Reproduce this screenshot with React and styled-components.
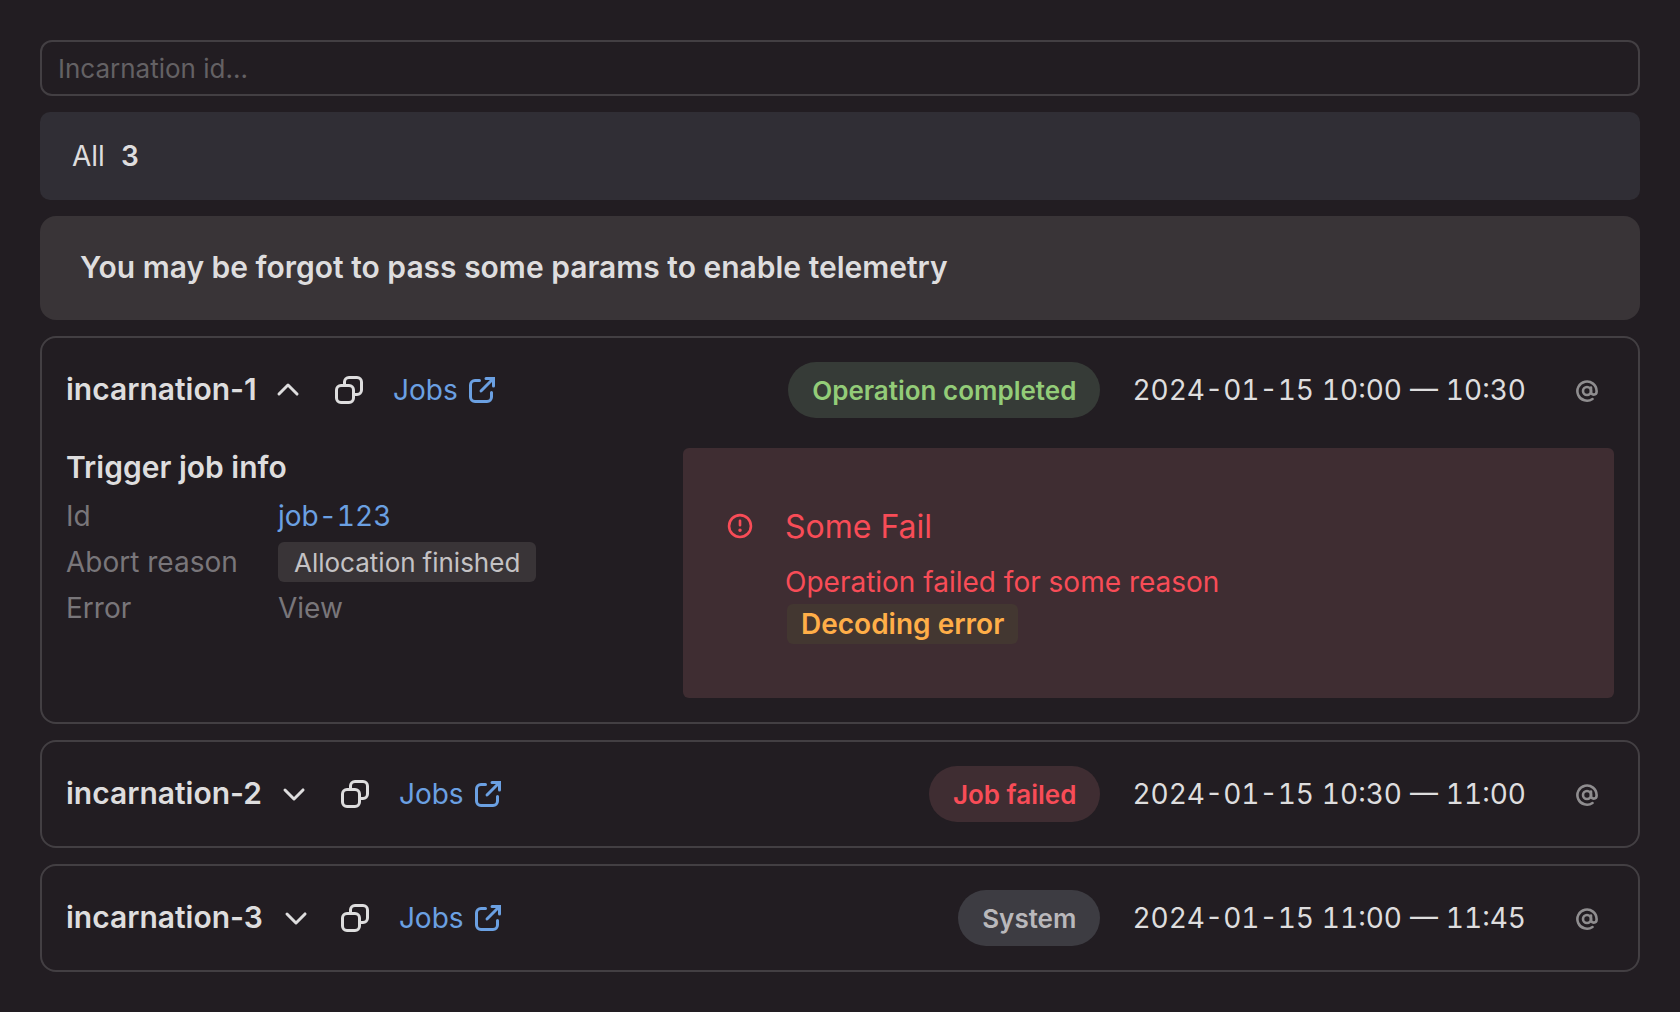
import React from "react";
import styled, { createGlobalStyle } from "styled-components";

const GlobalStyle = createGlobalStyle`
  *, *::before, *::after { box-sizing: border-box; }
  body {
    margin: 0;
    background: #221d22;
    color: #dedddE;
    font-family: Inter, "Liberation Sans", sans-serif;
    font-size: 28px;
    line-height: 40px;
  }
`;

const Page = styled.main`
  display: flex;
  flex-direction: column;
  gap: 16px;
  min-height: 1012px;
  padding: 40px;
`;

const SearchInput = styled.input`
  width: 100%;
  height: 56px;
  padding: 0 16px;
  border: 2px solid #433f43;
  border-radius: 12px;
  outline: none;
  background: transparent;
  color: inherit;
  font: inherit;
  font-size: 26px;
  &::placeholder { color: #646164; opacity: 1; }
`;

const Summary = styled.section`
  display: flex;
  align-items: center;
  gap: 16px;
  height: 88px;
  padding: 0 32px;
  border-radius: 10px;
  background: #302e35;
`;

const Count = styled.span`
  font-weight: 600;
`;

const Notice = styled.section`
  display: flex;
  align-items: center;
  height: 104px;
  padding: 0 40px 2px;
  border-radius: 16px;
  background: #393437;
  font-size: 30px;
  font-weight: 600;
`;

const Card = styled.article`
  display: flex;
  flex-direction: column;
  gap: 30px;
  padding: 24px;
  border: 2px solid #433f43;
  border-radius: 16px;
`;

const CardHeader = styled.header`
  display: flex;
  align-items: center;
  height: 56px;
`;

const Name = styled.h2`
  margin: 0;
  padding-bottom: 2px;
  font-size: 30px;
  font-weight: 600;
`;

const IconButton = styled.button`
  display: flex;
  margin: 0 0 0 ${(p) => p.$before}px;
  padding: 0;
  border: 0;
  background: none;
  color: inherit;
`;

const Link = styled.a`
  display: flex;
  align-items: center;
  gap: 8px;
  margin-left: ${(p) => p.$before || 0}px;
  color: #6ba0e2;
  text-decoration: none;
`;

const badgeTones = {
  success: ["#363b37", "#93cc78"],
  danger: ["#3f2d32", "#f84c57"],
  neutral: ["#3d3c42", "#b9b8bb"],
};

const StatusBadge = styled.span`
  height: 56px;
  margin-left: auto;
  padding: 1px 24px 0;
  border-radius: 28px;
  background: ${(p) => badgeTones[p.$tone][0]};
  color: ${(p) => badgeTones[p.$tone][1]};
  font-size: 26px;
  font-weight: 600;
  line-height: 56px;
`;

const Period = styled.time`
  margin-left: 32px;
  font-variant-numeric: tabular-nums;
  word-spacing: 0.4px;
`;

const Mention = styled.span`
  display: flex;
  justify-content: center;
  width: 56px;
  margin-left: 32px;
  padding: 2px 0 0 2px;
  color: #8f8d8f;
`;

const Details = styled.div`
  display: flex;
  justify-content: space-between;
`;

const JobInfo = styled.section`
  display: flex;
  flex-direction: column;
`;

const JobTitle = styled.h3`
  margin: 0 0 10px;
  font-size: 30px;
  font-weight: 600;
  line-height: 38px;
`;

const JobGrid = styled.dl`
  display: grid;
  grid-template-columns: 170px auto;
  column-gap: 42px;
  row-gap: 6px;
  margin: 0;
  white-space: nowrap;
  color: #79767a;
`;

const Term = styled.dt``;

const Value = styled.dd`
  display: flex;
  align-items: center;
  height: 40px;
  margin: 0;
  font-variant-numeric: tabular-nums;
`;

const Tag = styled.span`
  height: 40px;
  padding: 1px 16px 0;
  border-radius: 6px;
  background: #393437;
  color: #c4c2c4;
  font-size: 26px;
`;

const Alert = styled.section`
  display: flex;
  gap: 31px;
  width: 931px;
  height: 250px;
  padding: 59px 43px;
  border-radius: 6px;
  background: #3f2d32;
  color: #f84c57;
`;

const AlertIcon = styled.span`
  display: flex;
  align-items: center;
  height: 38px;
`;

const AlertBody = styled.div`
  display: flex;
  flex-direction: column;
  align-items: flex-start;
`;

const AlertTitle = styled.h3`
  margin: 0 0 17px;
  font-size: 32px;
  font-weight: 400;
  line-height: 40px;
`;

const AlertText = styled.p`
  margin: 0;
  line-height: 36px;
`;

const WarningTag = styled.span`
  margin: 4px 0 0 2px;
  padding: 0 14px;
  border-radius: 6px;
  background: #433731;
  color: #ffae48;
  font-weight: 600;
`;

const Icon = ({ size = 32, children }) => (
  <svg width={size} height={size} viewBox="0 0 16 16" fill="currentColor" fillRule="evenodd" aria-hidden="true">
    {children}
  </svg>
);

const CopyIcon = () => (
  <Icon>
    <path d="M12 2.5H8A1.5 1.5 0 0 0 6.5 4v1H8a3 3 0 0 1 3 3v1.5h1A1.5 1.5 0 0 0 13.5 8V4A1.5 1.5 0 0 0 12 2.5M11 11h1a3 3 0 0 0 3-3V4a3 3 0 0 0-3-3H8a3 3 0 0 0-3 3v1H4a3 3 0 0 0-3 3v4a3 3 0 0 0 3 3h4a3 3 0 0 0 3-3zM4 6.5h4A1.5 1.5 0 0 1 9.5 8v4A1.5 1.5 0 0 1 8 13.5H4A1.5 1.5 0 0 1 2.5 12V8A1.5 1.5 0 0 1 4 6.5" />
  </Icon>
);

const ExternalIcon = () => (
  <Icon>
    <path d="M10 1.5A.75.75 0 0 0 10 3h1.94L6.97 7.97a.75.75 0 0 0 1.06 1.06L13 4.06V6a.75.75 0 0 0 1.5 0V1.5zM7.5 3.25a.75.75 0 0 0-.75-.75H4.5a3 3 0 0 0-3 3v6a3 3 0 0 0 3 3h6a3 3 0 0 0 3-3V9.25a.75.75 0 0 0-1.5 0v2.25a1.5 1.5 0 0 1-1.5 1.5h-6A1.5 1.5 0 0 1 3 11.5v-6A1.5 1.5 0 0 1 4.5 4h2.25a.75.75 0 0 0 .75-.75" />
  </Icon>
);

const ChevronIcon = ({ open }) => (
  <Icon>
    <path
      d={
        open
          ? "M2.97 10.53a.75.75 0 0 1 0-1.06l4.5-4.5a.75.75 0 0 1 1.06 0l4.5 4.5a.75.75 0 1 1-1.06 1.06L8 6.56l-3.97 3.97a.75.75 0 0 1-1.06 0"
          : "M2.97 5.47a.75.75 0 0 1 1.06 0L8 9.44l3.97-3.97a.75.75 0 1 1 1.06 1.06l-4.5 4.5a.75.75 0 0 1-1.06 0l-4.5-4.5a.75.75 0 0 1 0-1.06"
      }
    />
  </Icon>
);

const AtIcon = () => (
  <svg width="24" height="24" viewBox="0 0 24 24" fill="none" stroke="currentColor" strokeWidth="2.6" strokeLinecap="round" aria-hidden="true">
    <circle cx="12" cy="12" r="4" />
    <path d="M16 8.5v4.3a2.8 2.8 0 0 0 5.6 0V12A9.6 9.6 0 1 0 17.5 20" />
  </svg>
);

const ErrorIcon = () => (
  <Icon size={28}>
    <path d="M8 13.5a5.5 5.5 0 1 0 0-11 5.5 5.5 0 0 0 0 11M8 15A7 7 0 1 0 8 1a7 7 0 0 0 0 14m1-4.6a1 1 0 1 1-2 0 1 1 0 0 1 2 0M8.75 5a.75.75 0 0 0-1.5 0v2.5a.75.75 0 0 0 1.5 0z" />
  </Icon>
);

const incarnations = [
  { id: "incarnation-1", open: true, tone: "success", status: "Operation completed", period: "2024-01-15 10:00 — 10:30", toggleGap: 15.4, copyGap: 29 },
  { id: "incarnation-2", tone: "danger", status: "Job failed", period: "2024-01-15 10:30 — 11:00", toggleGap: 16, copyGap: 29 },
  { id: "incarnation-3", tone: "neutral", status: "System", period: "2024-01-15 11:00 — 11:45", toggleGap: 17, copyGap: 27 },
];

function JobDetails() {
  return (
    <Details>
      <JobInfo>
        <JobTitle>Trigger job info</JobTitle>
        <JobGrid>
          <Term>Id</Term>
          <Value><Link href="#job-123">job-123</Link></Value>
          <Term>Abort reason</Term>
          <Value><Tag>Allocation finished</Tag></Value>
          <Term>Error</Term>
          <Value>View</Value>
        </JobGrid>
      </JobInfo>
      <Alert>
        <AlertIcon><ErrorIcon /></AlertIcon>
        <AlertBody>
          <AlertTitle>Some Fail</AlertTitle>
          <AlertText>Operation failed for some reason</AlertText>
          <WarningTag>Decoding error</WarningTag>
        </AlertBody>
      </Alert>
    </Details>
  );
}

function IncarnationCard({ item }) {
  return (
    <Card>
      <CardHeader>
        <Name>{item.id}</Name>
        <IconButton $before={item.toggleGap} aria-label="Toggle details"><ChevronIcon open={item.open} /></IconButton>
        <IconButton $before={item.copyGap} aria-label="Copy"><CopyIcon /></IconButton>
        <Link $before={28} href="#jobs">Jobs <ExternalIcon /></Link>
        <StatusBadge $tone={item.tone}>{item.status}</StatusBadge>
        <Period>{item.period}</Period>
        <Mention><AtIcon /></Mention>
      </CardHeader>
      {item.open && <JobDetails />}
    </Card>
  );
}

export default function App() {
  return (
    <>
      <GlobalStyle />
      <Page>
        <SearchInput placeholder="Incarnation id..." />
        <Summary>All <Count>3</Count></Summary>
        <Notice>You may be forgot to pass some params to enable telemetry</Notice>
        {incarnations.map((item) => <IncarnationCard key={item.id} item={item} />)}
      </Page>
    </>
  );
}
